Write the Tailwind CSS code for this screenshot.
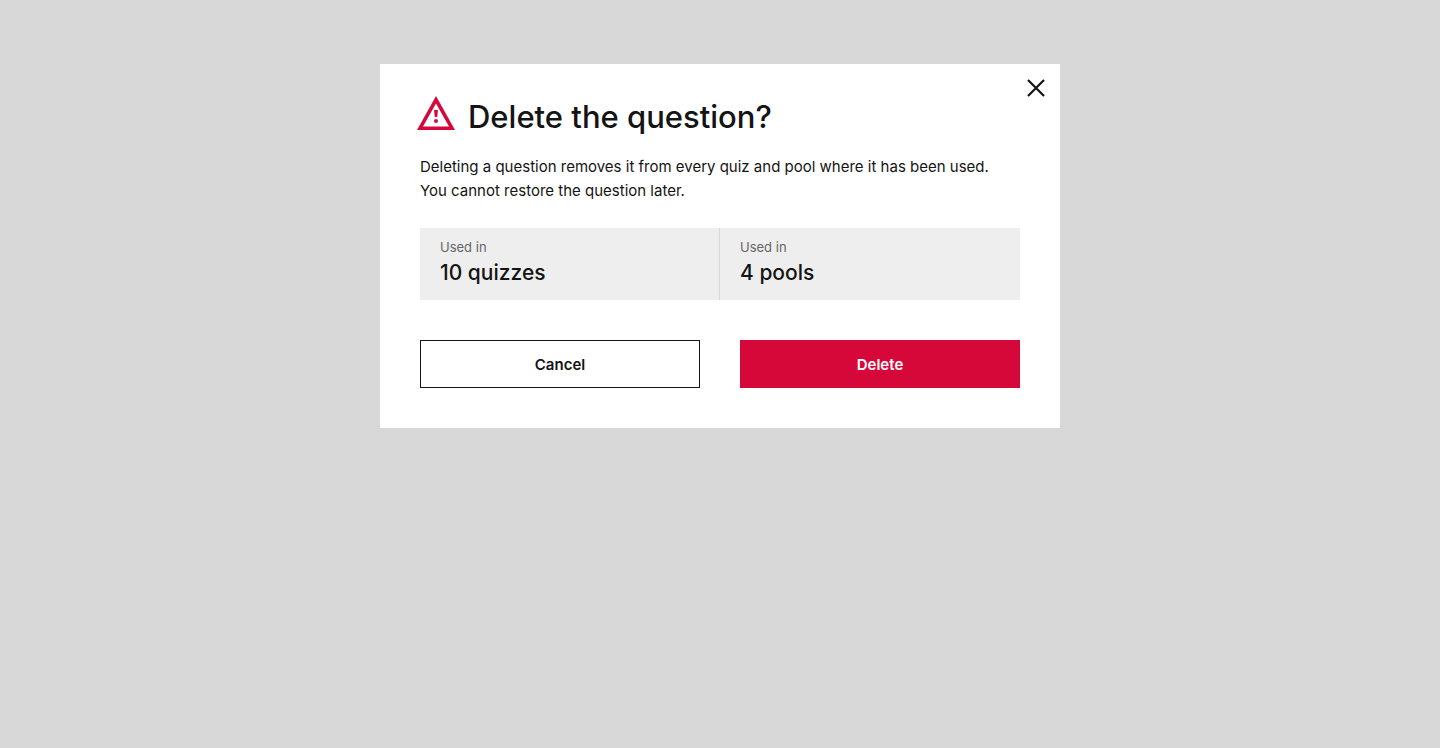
<!DOCTYPE html>
<html lang="en">
<head>
  <meta charset="UTF-8" />
  <meta name="viewport" content="width=device-width, initial-scale=1.0" />
  <title>Delete the question?</title>
  <script src="https://cdn.jsdelivr.net/npm/@tailwindcss/browser@4"></script>
</head>
<body class="min-h-screen bg-[#d8d8d8] font-['Inter',sans-serif] text-[#141414]">
  <div class="flex justify-center pt-16">
    <div role="dialog" aria-modal="true" aria-labelledby="dialogTitle" class="relative w-full max-w-[680px] bg-white px-10 pt-8 pb-10">
      <button type="button" aria-label="Close" class="absolute top-3 right-3 cursor-pointer">
        <svg class="size-6" viewBox="0 0 24 24" fill="none" stroke="currentColor" stroke-width="2.200">
          <path d="M4 4l16 16M20 4L4 20" />
        </svg>
      </button>

      <div class="flex gap-3">
        <svg class="-ml-1 h-9 w-10 shrink-0 text-[#d50839]" viewBox="0 0 40 36" fill="currentColor" aria-hidden="true">
          <path fill-rule="evenodd" d="M20 0L39 34H1ZM20 7.500L7 30.500H33Z" />
          <path d="M18 14h4l-.8 7h-2.400z" />
          <circle cx="20" cy="25" r="2" />
        </svg>
        <h1 id="dialogTitle" class="text-[31px] leading-[42px] font-medium">Delete the question?</h1>
      </div>

      <p class="mt-[17px] text-[15px] leading-6">Deleting a question removes it from every quiz and pool where it has been used.<br>You cannot restore the question later.</p>

      <dl class="mt-[25px] grid grid-cols-2 bg-[#eeeeee]">
        <div class="h-18 border-r border-[#d8d8d8] px-5 pt-2">
          <dt class="text-[13px] leading-[22px] text-[#666666]">Used in</dt>
          <dd class="text-[21px] leading-[30px] font-medium">10 quizzes</dd>
        </div>
        <div class="h-18 px-5 pt-2">
          <dt class="text-[13px] leading-[22px] text-[#666666]">Used in</dt>
          <dd class="text-[21px] leading-[30px] font-medium">4 pools</dd>
        </div>
      </dl>

      <div class="mt-10 grid grid-cols-2 gap-10">
        <button type="button" class="h-12 cursor-pointer border border-[#141414] bg-white pt-0.5 text-[15px] font-semibold">Cancel</button>
        <button type="button" class="h-12 cursor-pointer bg-[#d50839] pt-0.5 text-[15px] font-semibold text-white">Delete</button>
      </div>
    </div>
  </div>
</body>
</html>
